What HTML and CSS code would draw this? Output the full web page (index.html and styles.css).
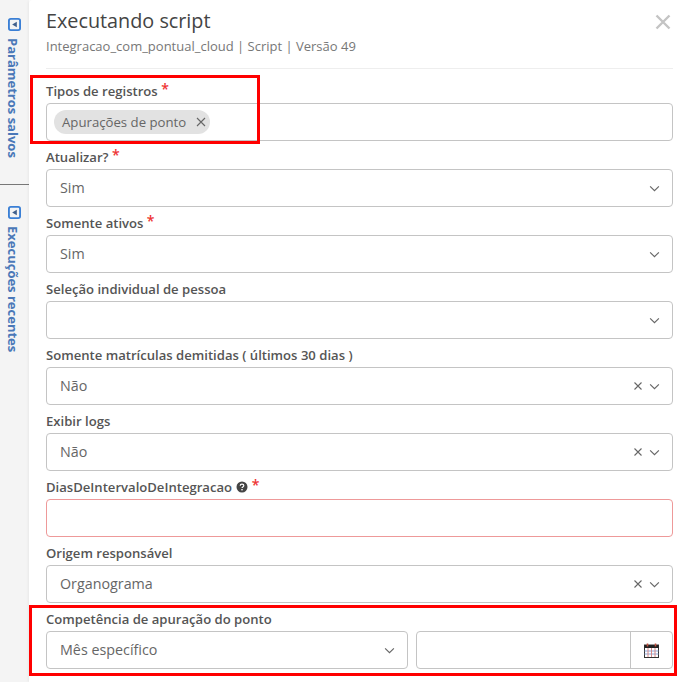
FILE: index.html
```html
<!DOCTYPE html>
<html lang="pt-BR">
<head>
  <meta charset="UTF-8" />
  <title>Executando script</title>
  <link rel="stylesheet" href="styles.css">
</head>
<body>
  <div class="page">
    <aside class="side">
      <div class="side-tab side-tab-saved">
        <svg class="side-icon" viewBox="0 0 14 14"><rect x="1" y="1" width="12" height="12" rx="2" fill="none" stroke="#3a7fd5" stroke-width="2"/><path d="M9.5 4v6L4.5 7z" fill="#3f5f8c"/></svg>
        <span class="side-text">Parâmetros salvos</span>
      </div>
      <div class="side-tab">
        <svg class="side-icon" viewBox="0 0 14 14"><rect x="1" y="1" width="12" height="12" rx="2" fill="none" stroke="#3a7fd5" stroke-width="2"/><path d="M9.5 4v6L4.5 7z" fill="#3f5f8c"/></svg>
        <span class="side-text">Execuções recentes</span>
      </div>
    </aside>

    <main class="panel">
      <header class="panel-head">
        <h1>Executando script</h1>
        <p>Integracao_com_pontual_cloud | Script | Versão 49</p>
        <svg class="close" viewBox="0 0 16 16"><path d="M1.5 1.5l13 13M14.5 1.5l-13 13" stroke="#c4c4c4" stroke-width="2.4" fill="none"/></svg>
      </header>

      <form class="form">
        <div class="field">
          <label>Tipos de registros <span class="req">*</span></label>
          <div class="input input-tags">
            <span class="tag">Apurações de ponto
              <svg class="tag-x" viewBox="0 0 10 10"><path d="M1 1l8 8M9 1l-8 8" stroke="#666" stroke-width="1.1" fill="none"/></svg>
            </span>
          </div>
        </div>

        <div class="field">
          <label>Atualizar? <span class="req">*</span></label>
          <div class="input"><span class="value">Sim</span>
            <svg class="chev" viewBox="0 0 12 8"><path d="M1 1.5l5 5 5-5" stroke="#666" stroke-width="1.3" fill="none"/></svg>
          </div>
        </div>

        <div class="field">
          <label>Somente ativos <span class="req">*</span></label>
          <div class="input"><span class="value">Sim</span>
            <svg class="chev" viewBox="0 0 12 8"><path d="M1 1.5l5 5 5-5" stroke="#666" stroke-width="1.3" fill="none"/></svg>
          </div>
        </div>

        <div class="field">
          <label>Seleção individual de pessoa</label>
          <div class="input"><span class="value"></span>
            <svg class="chev" viewBox="0 0 12 8"><path d="M1 1.5l5 5 5-5" stroke="#666" stroke-width="1.3" fill="none"/></svg>
          </div>
        </div>

        <div class="field">
          <label>Somente matrículas demitidas ( últimos 30 dias )</label>
          <div class="input"><span class="value">Não</span>
            <svg class="clear" viewBox="0 0 10 10"><path d="M1.5 1.5l7 7M8.5 1.5l-7 7" stroke="#666" stroke-width="1.1" fill="none"/></svg>
            <svg class="chev" viewBox="0 0 12 8"><path d="M1 1.5l5 5 5-5" stroke="#666" stroke-width="1.3" fill="none"/></svg>
          </div>
        </div>

        <div class="field">
          <label>Exibir logs</label>
          <div class="input"><span class="value">Não</span>
            <svg class="clear" viewBox="0 0 10 10"><path d="M1.5 1.5l7 7M8.5 1.5l-7 7" stroke="#666" stroke-width="1.1" fill="none"/></svg>
            <svg class="chev" viewBox="0 0 12 8"><path d="M1 1.5l5 5 5-5" stroke="#666" stroke-width="1.3" fill="none"/></svg>
          </div>
        </div>

        <div class="field">
          <label>DiasDeIntervaloDeIntegracao
            <svg class="help" viewBox="0 0 12 12"><circle cx="6" cy="6" r="5.5" fill="#444"/><path d="M4.2 4.7c0-1 .8-1.6 1.8-1.6s1.8.6 1.8 1.5c0 1.3-1.8 1.3-1.8 2.5" stroke="#fff" stroke-width="1.2" fill="none"/><rect x="5.3" y="8" width="1.4" height="1.4" fill="#fff"/></svg>
            <span class="req">*</span></label>
          <div class="input input-error"></div>
        </div>

        <div class="field">
          <label>Origem responsável</label>
          <div class="input"><span class="value">Organograma</span>
            <svg class="clear" viewBox="0 0 10 10"><path d="M1.5 1.5l7 7M8.5 1.5l-7 7" stroke="#666" stroke-width="1.1" fill="none"/></svg>
            <svg class="chev" viewBox="0 0 12 8"><path d="M1 1.5l5 5 5-5" stroke="#666" stroke-width="1.3" fill="none"/></svg>
          </div>
        </div>

        <div class="field">
          <label>Competência de apuração do ponto</label>
          <div class="field-split">
            <div class="input"><span class="value">Mês específico</span>
              <svg class="chev" viewBox="0 0 12 8"><path d="M1 1.5l5 5 5-5" stroke="#666" stroke-width="1.3" fill="none"/></svg>
            </div>
            <div class="input input-date">
              <span class="date-btn">
                <svg class="cal" viewBox="0 0 15 15">
                  <rect x="0.5" y="2" width="14" height="12.5" fill="#fff" stroke="#333"/>
                  <rect x="0.5" y="2" width="14" height="3" fill="#222"/>
                  <path d="M3.5 0.5v3M11.5 0.5v3" stroke="#c0503f" stroke-width="1.6"/>
                  <path d="M0.5 8h14M0.5 11h14" stroke="#8aa5d8"/>
                  <path d="M4 5v9M7.5 5v9M11 5v9" stroke="#d58a8a"/>
                </svg>
              </span>
            </div>
          </div>
        </div>
      </form>

      <div class="mark mark-top"></div>
      <div class="mark mark-bottom"></div>
    </main>
  </div>
</body>
</html>
```

FILE: styles.css
```css
* {
  box-sizing: border-box;
}

html, body {
  margin: 0;
  padding: 0;
  height: 682px;
  overflow: hidden;
}

body {
  font-family: "Open Sans", sans-serif;
  color: #555;
  background: #fff;
}

.page {
  display: flex;
  height: 682px;
}

.side {
  width: 29px;
  flex: none;
  background: #f4f4f4;
}

.side-tab {
  display: flex;
  flex-direction: column;
  align-items: flex-start;
  gap: 7px;
  padding: 18px 0 0 8px;
  width: 29px;
}

.side-tab-saved {
  height: 185px;
  border-bottom: 1px solid #777;
}

.side-tab:last-child {
  padding-top: 21px;
}

.side-icon {
  width: 13px;
  height: 13px;
}

.side-text {
  writing-mode: vertical-rl;
  margin-left: -2px;
  font-size: 13px;
  font-weight: 700;
  line-height: 14px;
  color: #4a78b8;
  white-space: nowrap;
}

.panel {
  position: relative;
  flex: 1;
  padding: 0 14px 0 17px;
  background: #fff;
  border-top-left-radius: 4px;
  box-shadow: -1px 0 3px rgba(0, 0, 0, 0.05);
}

.panel-head {
  position: relative;
  height: 69px;
  padding-top: 6px;
  border-bottom: 1px solid #eee;
}

.panel-head h1 {
  margin: 0;
  font-size: 19.8px;
  font-weight: 400;
  line-height: 30px;
  color: #444;
}

.panel-head p {
  margin: 1px 0 0;
  font-size: 13px;
  line-height: 18px;
  color: #777;
}

.close {
  position: absolute;
  top: 14px;
  right: 2px;
  width: 16px;
  height: 16px;
}

.form {
  padding-top: 6px;
}

.field {
  height: 66px;
}

.field label {
  display: block;
  height: 28px;
  padding-top: 8px;
  font-size: 13.1px;
  font-weight: 600;
  line-height: 17px;
  color: #555;
  white-space: nowrap;
}

.req {
  color: #e33;
  font-size: 14px;
  line-height: 10px;
  position: relative;
  top: -2px;
}

.help {
  width: 12px;
  height: 12px;
  vertical-align: -1px;
  margin-left: 1px;
}

.input {
  display: flex;
  align-items: center;
  height: 38px;
  padding: 0 8px 0 13px;
  border: 1px solid #c4c4c4;
  border-radius: 4px;
  background: #fff;
}

.input-error {
  border-color: #e99;
}

.input-tags {
  padding-left: 7px;
}

.value {
  flex: 1;
  position: relative;
  top: -1px;
  font-size: 14.3px;
  color: #666;
}

.tag {
  display: flex;
  align-items: center;
  gap: 10px;
  height: 24px;
  padding: 0 4px 0 8px;
  border-radius: 12px;
  background: #e2e2e2;
  font-size: 13.2px;
  color: #666;
}

.tag-x {
  width: 10px;
  height: 10px;
}

.chev {
  width: 11px;
  height: 7px;
  margin-right: 4px;
}

.clear {
  width: 10px;
  height: 10px;
  margin-right: 6px;
}

.field-split {
  display: grid;
  grid-template-columns: 362px 257px;
  gap: 8px;
}

.input-date {
  justify-content: flex-end;
  padding: 0;
}

.date-btn {
  display: flex;
  align-items: center;
  justify-content: center;
  width: 42px;
  height: 100%;
  border-left: 1px solid #c4c4c4;
}

.cal {
  width: 15px;
  height: 15px;
}

.mark {
  position: absolute;
  border: 3px solid #f00;
}

.mark-top {
  left: 1px;
  top: 75px;
  width: 230px;
  height: 69px;
}

.mark-bottom {
  left: 0;
  top: 605px;
  width: 648px;
  height: 71px;
}
```
